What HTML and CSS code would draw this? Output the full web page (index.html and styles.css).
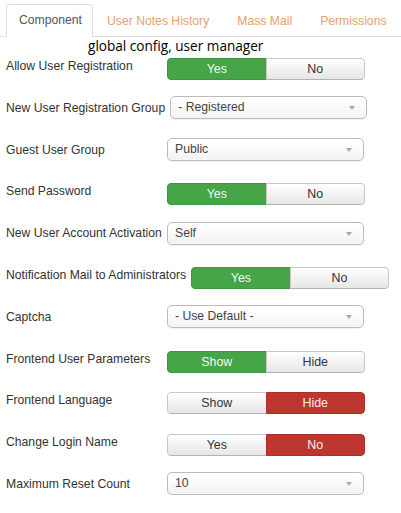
FILE: index.html
```html
<!DOCTYPE html>
<html>
<head>
<meta charset="utf-8">
<link rel="stylesheet" href="styles.css">
</head>
<body>
<div class="tabs">
  <div class="tab active">Component</div>
  <div class="tab">User Notes History</div>
  <div class="tab">Mass Mail</div>
  <div class="tab">Permissions</div>
</div>
<div class="caption">global config, user manager</div>
<div class="form">
  <div class="row">
    <div class="label">Allow User Registration</div>
    <div class="toggle"><span class="btn on-green">Yes</span><span class="btn">No</span></div>
  </div>
  <div class="row">
    <div class="label">New User Registration Group</div>
    <div class="select"><span>- Registered</span><i class="arrow"></i></div>
  </div>
  <div class="row">
    <div class="label">Guest User Group</div>
    <div class="select"><span>Public</span><i class="arrow"></i></div>
  </div>
  <div class="row">
    <div class="label">Send Password</div>
    <div class="toggle"><span class="btn on-green">Yes</span><span class="btn">No</span></div>
  </div>
  <div class="row">
    <div class="label">New User Account Activation</div>
    <div class="select"><span>Self</span><i class="arrow"></i></div>
  </div>
  <div class="row">
    <div class="label">Notification Mail to Administrators</div>
    <div class="toggle"><span class="btn on-green">Yes</span><span class="btn">No</span></div>
  </div>
  <div class="row">
    <div class="label">Captcha</div>
    <div class="select"><span>- Use Default -</span><i class="arrow"></i></div>
  </div>
  <div class="row">
    <div class="label">Frontend User Parameters</div>
    <div class="toggle"><span class="btn on-green">Show</span><span class="btn">Hide</span></div>
  </div>
  <div class="row">
    <div class="label">Frontend Language</div>
    <div class="toggle"><span class="btn">Show</span><span class="btn on-red">Hide</span></div>
  </div>
  <div class="row">
    <div class="label">Change Login Name</div>
    <div class="toggle"><span class="btn">Yes</span><span class="btn on-red">No</span></div>
  </div>
  <div class="row">
    <div class="label">Maximum Reset Count</div>
    <div class="select"><span>10</span><i class="arrow"></i></div>
  </div>
</div>
</body>
</html>
```
FILE: styles.css
```css
html, body {
  margin: 0;
  padding: 0;
  background: #fff;
}
body {
  font-family: "Liberation Sans", Arial, sans-serif;
  font-size: 12.2px;
  color: #333;
  width: 401px;
}
.tabs {
  display: flex;
  align-items: flex-end;
  padding: 4px 0 0 6px;
  border-bottom: 1px solid #ddd;
  height: 32px;
}
.tab {
  flex-shrink: 0;
  white-space: nowrap;
  height: 32px;
  line-height: 31px;
  padding: 0 13px 0 13px;
  color: #e8a26a;
  font-size: 12.2px;
  box-sizing: border-box;
  border: 1px solid transparent;
  border-bottom: none;
  margin-bottom: -1px;
}
.tab.active {
  color: #555;
  background: #fff;
  border-color: #ddd;
  border-radius: 4px 4px 0 0;
  padding: 0 10px 0 12px;
  height: 33px;
}
.caption {
  font-family: "Open Sans", "DejaVu Sans", sans-serif;
  font-size: 13.6px;
  color: #000;
  padding-left: 88px;
  height: 17px;
  line-height: 17px;
  padding-top: 0;
}
.form {
  display: flex;
  flex-direction: column;
  gap: 19.8px;
  padding-left: 6px;
  padding-top: 1px;
}
.row {
  display: flex;
  align-items: center;
  height: 22px;
}
.label {
  min-width: 156px;
  padding-right: 5px;
  white-space: nowrap;
  flex-shrink: 0;
  color: #333;
}
.toggle {
  display: flex;
  width: 198px;
  height: 22px;
  margin-top: 6px;
  border-radius: 4px;
  box-sizing: border-box;
  overflow: hidden;
}
.btn {
  flex: 1;
  text-align: center;
  line-height: 20px;
  font-size: 12.4px;
  color: #333;
  background: linear-gradient(#ffffff, #e6e6e6);
  border: 1px solid #c8c8c8;
  border-bottom-color: #b3b3b3;
}
.btn:first-child {
  border-radius: 4px 0 0 4px;
  border-right: none;
}
.btn:last-child {
  border-radius: 0 4px 4px 0;
}
.btn.on-green {
  background: #46a546;
  color: #f0f8f0;
  border-color: #3f963f;
}
.btn.on-red {
  background: #bd362f;
  color: #fbeeee;
  border-color: #a8302a;
}
.select {
  position: relative;
  width: 197px;
  height: 23px;
  box-sizing: border-box;
  border: 1px solid #bbb;
  border-radius: 5px;
  background: linear-gradient(#ffffff 20%, #f2f2f2);
  box-shadow: 0 0 2px #fff inset, 0 1px 1px rgba(0,0,0,0.06);
  line-height: 21px;
  padding-left: 7px;
  color: #444;
}
.arrow {
  position: absolute;
  right: 11px;
  top: 9px;
  width: 0;
  height: 0;
  border-left: 3px solid transparent;
  border-right: 3px solid transparent;
  border-top: 4px solid #aaa;
}
```
